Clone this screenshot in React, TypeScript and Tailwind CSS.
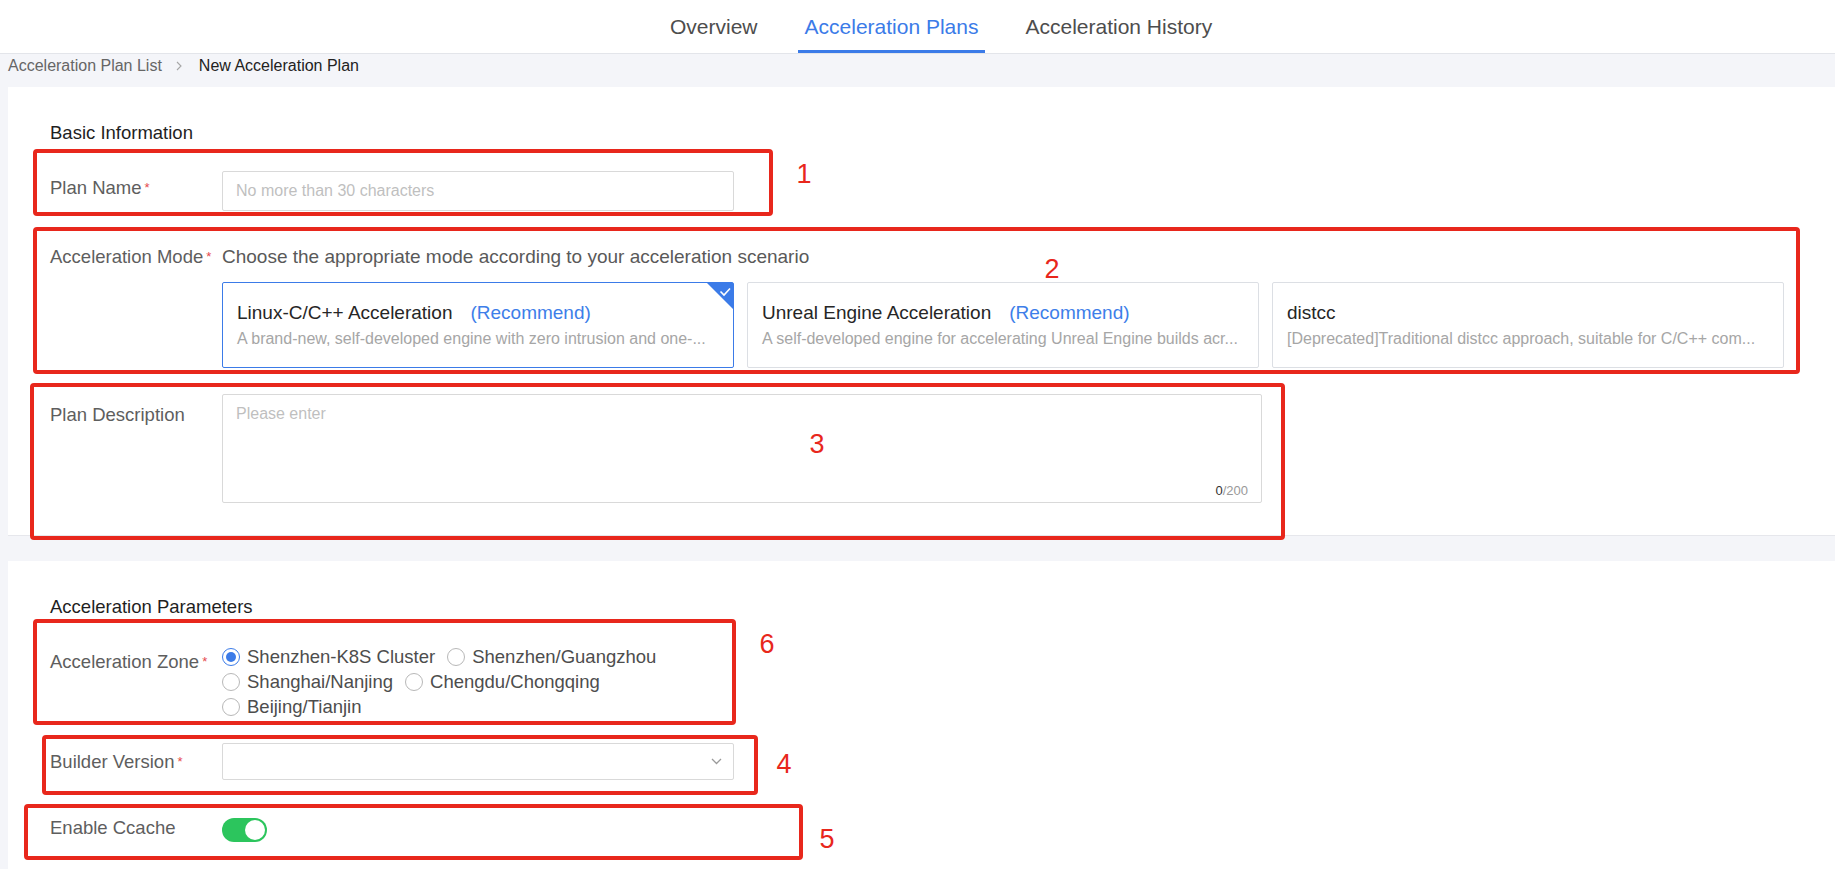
import { ReactNode } from "react"

// Top tabs
const tabs = [
  { id: "overview", label: "Overview", active: false },
  { id: "plans", label: "Acceleration Plans", active: true },
  { id: "history", label: "Acceleration History", active: false },
]

const modes = [
  {
    id: "linux",
    title: "Linux-C/C++ Acceleration",
    recommend: true,
    desc: "A brand-new, self-developed engine with zero intrusion and one-...",
    selected: true,
  },
  {
    id: "ue",
    title: "Unreal Engine Acceleration",
    recommend: true,
    desc: "A self-developed engine for accelerating Unreal Engine builds acr...",
    selected: false,
  },
  {
    id: "distcc",
    title: "distcc",
    recommend: false,
    desc: "[Deprecated]Traditional distcc approach, suitable for C/C++ com...",
    selected: false,
  },
]

const zones = [
  { id: "sz-k8s", label: "Shenzhen-K8S Cluster", checked: true },
  { id: "sz-gz", label: "Shenzhen/Guangzhou", checked: false },
  { id: "sh-nj", label: "Shanghai/Nanjing", checked: false },
  { id: "cd-cq", label: "Chengdu/Chongqing", checked: false },
  { id: "bj-tj", label: "Beijing/Tianjin", checked: false },
]

const Nav = () => (
  <header className="h-[54px] shrink-0 bg-white border-b border-[#e3e5ea]">
    <nav className="flex h-full items-stretch gap-[33px] pl-[663px]">
      {tabs.map((tab) => (
        <div
          key={tab.id}
          className={`flex items-center px-[7px] border-t-[3px] border-b-[3px] border-t-transparent text-[21px] ${
            tab.active ? "border-b-[#3b7be8] text-[#3b7be8]" : "border-b-transparent text-[#4d4d4d]"
          }`}
        >
          {tab.label}
        </div>
      ))}
    </nav>
  </header>
)

const Breadcrumb = () => (
  <div className="h-[33px] shrink-0 flex items-start px-[8px] text-[16px] leading-[24px]">
    <span className="text-[#666]">Acceleration Plan List</span>
    <span className="ml-[14px] mr-[17px] h-[24px] flex items-center">
      <svg width="6" height="10" viewBox="0 0 6 10" fill="none">
        <path d="M1 1L5 5L1 9" stroke="#a6a6a6" strokeWidth="1.1" />
      </svg>
    </span>
    <span className="text-[#222]">New Acceleration Plan</span>
  </div>
)

const Label = ({ text, required, className }: { text: string; required?: boolean; className: string }) => (
  <div className={`w-[172px] shrink-0 whitespace-nowrap text-[18.5px] leading-[24px] text-[#5e5e5e] ${className}`}>
    {text}
    {required && <span className="ml-[3px] text-[13px] align-top text-[#e5484d]">*</span>}
  </div>
)

const SectionTitle = ({ children }: { children: ReactNode }) => (
  <h2 className="text-[18.5px] leading-[24px] text-[#1f1f1f]">{children}</h2>
)

const ModeCard = ({ mode }: { mode: (typeof modes)[number] }) => (
  <div
    className={`relative w-[512px] h-[86px] rounded-[2px] border px-[14px] pt-[18px] ${
      mode.selected ? "border-[#3b7be8]" : "border-[#dcdfe4]"
    }`}
  >
    <div className="text-[19px] leading-[24px] text-[#262626] whitespace-nowrap">
      {mode.title}
      {mode.recommend && <span className="ml-[18px] text-[#3d7ee9]">(Recommend)</span>}
    </div>
    <div className="mt-[3px] text-[16px] leading-[22px] text-[#a6a6a6] whitespace-nowrap">{mode.desc}</div>
    {mode.selected && (
      <svg className="absolute right-0 top-0" width="26" height="26" viewBox="0 0 26 26">
        <polygon points="0,0 26,0 26,26" fill="#3b7be8" />
        <path d="M13.5 8.5L17 12L23 5.5" stroke="white" strokeWidth="1.6" fill="none" />
      </svg>
    )}
  </div>
)

const Radio = ({ label, checked }: { label: string; checked: boolean }) => (
  <label className="flex items-center gap-[7px] h-[25px] text-[18.5px] text-[#4d4d4d] whitespace-nowrap">
    <span
      className={`w-[18px] h-[18px] rounded-full border flex items-center justify-center bg-white ${
        checked ? "border-[#3b7be8]" : "border-[#b8b8b8]"
      }`}
    >
      {checked && <span className="w-[10px] h-[10px] rounded-full bg-[#3b7be8]" />}
    </span>
    {label}
  </label>
)

const RedBox = ({ className }: { className: string }) => (
  <div className={`absolute border-[4px] border-[#e8271c] rounded-[4px] pointer-events-none ${className}`} />
)

const Num = ({ n, className }: { n: string; className: string }) => (
  <span className={`absolute w-[20px] text-center text-[27px] leading-[30px] text-[#e8271c] ${className}`}>{n}</span>
)

export default function App() {
  return (
    <div className="relative flex h-[869px] w-full flex-col overflow-hidden bg-[#f4f5f9] font-['Liberation_Sans',Arial,sans-serif]">
      <Nav />
      <Breadcrumb />

      {/* Basic information */}
      <section className="ml-[8px] shrink-0 bg-white pl-[42px] pt-[34px] pb-[32px] border-b border-[#e6e7ec]">
        <SectionTitle>Basic Information</SectionTitle>

        <div className="mt-[26px] flex">
          <Label text="Plan Name" required className="pt-[5px]" />
          <div className="w-[512px] h-[40px] rounded-[2px] border border-[#d9d9d9] px-[13px] flex items-center text-[16px] text-[#bfbfbf]">
            No more than 30 characters
          </div>
        </div>

        <div className="mt-[34px] flex">
          <Label text="Acceleration Mode" required className="" />
          <div>
            <div className="text-[19px] leading-[24px] text-[#595959] whitespace-nowrap">
              Choose the appropriate mode according to your acceleration scenario
            </div>
            <div className="mt-[13px] flex gap-[13px]">
              {modes.map((m) => (
                <ModeCard key={m.id} mode={m} />
              ))}
            </div>
          </div>
        </div>

        <div className="mt-[26px] flex">
          <Label text="Plan Description" className="pt-[9px]" />
          <div className="w-[1040px] h-[109px] rounded-[2px] border border-[#d9d9d9] px-[13px] pt-[8px] pb-[2px] flex flex-col justify-between">
            <span className="text-[16px] leading-[22px] text-[#bfbfbf]">Please enter</span>
            <span className="self-end text-[13px] leading-[18px] text-[#999]">
              <span className="text-[#333]">0</span>/200
            </span>
          </div>
        </div>
      </section>

      {/* Acceleration parameters */}
      <section className="ml-[8px] mt-[25px] flex-1 bg-white pl-[42px] pt-[34px]">
        <SectionTitle>Acceleration Parameters</SectionTitle>

        <div className="mt-[25px] flex">
          <Label text="Acceleration Zone" required className="pt-[6px]" />
          <div className="w-[512px] flex flex-wrap gap-x-[12px]">
            {zones.map((z) => (
              <Radio key={z.id} label={z.label} checked={z.checked} />
            ))}
          </div>
        </div>

        <div className="mt-[24px] flex">
          <Label text="Builder Version" required className="pt-[7px]" />
          <div className="w-[512px] h-[37px] rounded-[2px] border border-[#d9d9d9] flex items-center justify-end pr-[11px]">
            <svg width="11" height="7" viewBox="0 0 11 7" fill="none">
              <path d="M1 1L5.5 5.5L10 1" stroke="#9a9a9a" strokeWidth="1.3" />
            </svg>
          </div>
        </div>

        <div className="mt-[36px] flex">
          <Label text="Enable Ccache" className="" />
          <div className="mt-[2px] w-[45px] h-[24px] rounded-full bg-[#2cc55d] flex items-center justify-end pr-[2px]">
            <span className="w-[20px] h-[20px] rounded-full bg-white" />
          </div>
        </div>
      </section>

      {/* Annotation overlay */}
      <RedBox className="left-[33px] top-[149px] w-[740px] h-[67px]" />
      <RedBox className="left-[33px] top-[227px] w-[1767px] h-[147px]" />
      <RedBox className="left-[30px] top-[383px] w-[1255px] h-[157px]" />
      <RedBox className="left-[33px] top-[619px] w-[703px] h-[106px]" />
      <RedBox className="left-[42px] top-[735px] w-[716px] h-[60px]" />
      <RedBox className="left-[24px] top-[804px] w-[779px] h-[56px]" />

      <Num n="1" className="left-[794px] top-[159px]" />
      <Num n="2" className="left-[1042px] top-[254px]" />
      <Num n="3" className="left-[807px] top-[429px]" />
      <Num n="6" className="left-[757px] top-[629px]" />
      <Num n="4" className="left-[774px] top-[749px]" />
      <Num n="5" className="left-[817px] top-[824px]" />
    </div>
  )
}
